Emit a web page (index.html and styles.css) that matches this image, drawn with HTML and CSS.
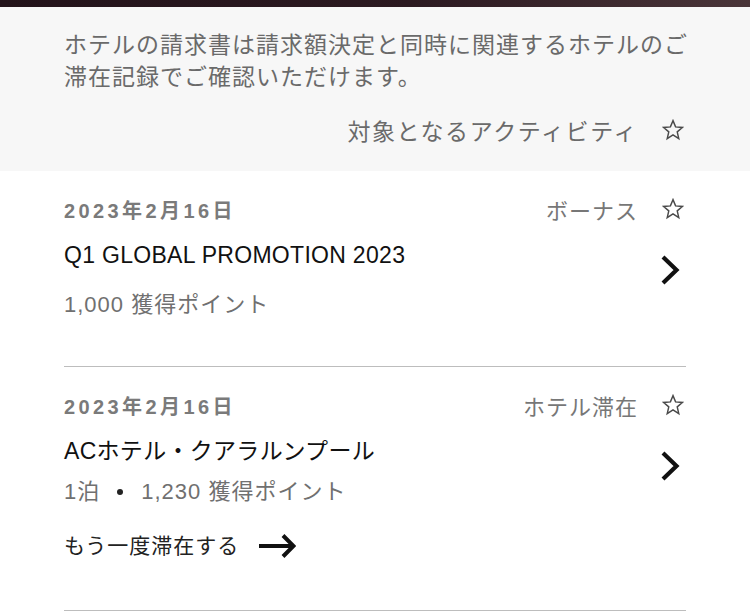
FILE: index.html
```html
<!DOCTYPE html>
<html lang="ja">
<head>
<meta charset="utf-8">
<title>アクティビティ</title>
<link rel="stylesheet" href="styles.css">
</head>
<body>
<div class="topbar"></div>
<section class="notice">
  <p class="notice-text">ホテルの請求書は請求額決定と同時に関連するホテルのご滞在記録でご確認いただけます。</p>
  <div class="filter">
    <span class="filter-label">対象となるアクティビティ</span>
    <svg class="star" viewBox="0 0 24 24" width="22" height="22"><polygon points="12,1.8 14.8,8.6 22.2,9.2 16.6,14 18.3,21.4 12,17.4 5.7,21.4 7.4,14 1.8,9.2 9.2,8.6"/></svg>
  </div>
</section>
<ul class="activity-list">
  <li class="activity">
    <div class="activity-head">
      <span class="date">2023年2月16日</span>
      <span class="type">ボーナス</span>
      <svg class="star" viewBox="0 0 24 24" width="22" height="22"><polygon points="12,1.8 14.8,8.6 22.2,9.2 16.6,14 18.3,21.4 12,17.4 5.7,21.4 7.4,14 1.8,9.2 9.2,8.6"/></svg>
    </div>
    <div class="activity-body">
      <div class="activity-info">
        <div class="title">Q1 GLOBAL PROMOTION 2023</div>
        <div class="points">1,000 獲得ポイント</div>
      </div>
      <svg class="chevron" viewBox="0 0 20 30" width="20" height="30"><polyline points="3,2 16.5,15 3,28"/></svg>
    </div>
  </li>
  <li class="activity activity-stay">
    <div class="activity-head">
      <span class="date">2023年2月16日</span>
      <span class="type">ホテル滞在</span>
      <svg class="star" viewBox="0 0 24 24" width="22" height="22"><polygon points="12,1.8 14.8,8.6 22.2,9.2 16.6,14 18.3,21.4 12,17.4 5.7,21.4 7.4,14 1.8,9.2 9.2,8.6"/></svg>
    </div>
    <div class="activity-body">
      <div class="activity-info">
        <div class="title">ACホテル・クアラルンプール</div>
        <div class="meta"><span>1泊</span><span class="dot"></span><span>1,230 獲得ポイント</span></div>
        <div class="rebook">
          <span>もう一度滞在する</span>
          <svg class="arrow" viewBox="0 0 38 24" width="38" height="24"><line x1="1" y1="12" x2="35" y2="12"/><polyline points="25,1.5 35.5,12 25,22.5"/></svg>
        </div>
      </div>
      <svg class="chevron" viewBox="0 0 20 30" width="20" height="30"><polyline points="3,2 16.5,15 3,28"/></svg>
    </div>
  </li>
</ul>
</body>
</html>
```
FILE: styles.css
```css
html, body {
  margin: 0;
  padding: 0;
  background: #ffffff;
}

body {
  font-family: "Liberation Sans", "Noto Sans CJK JP", sans-serif;
  color: #111;
  width: 750px;
  overflow: hidden;
}

.topbar {
  height: 7px;
  background: linear-gradient(90deg, #23131a 0%, #2c1a21 55%, #4a3539 100%);
}

.notice {
  background: #f7f7f7;
  padding: 22px 50px 26px 64px;
}

.notice-text {
  margin: 0;
  font-size: 23px;
  line-height: 32px;
  letter-spacing: 1px;
  color: #6a6a6a;
}

.filter {
  margin-top: 22px;
  padding-right: 14px;
  display: flex;
  justify-content: flex-end;
  align-items: center;
  height: 30px;
}

.filter-label {
  font-size: 23px;
  letter-spacing: 1.6px;
  color: #6a6a6a;
}

.star {
  flex: none;
  margin-left: 24px;
  margin-right: 2px;
  fill: none;
  stroke: #4a4a4a;
  stroke-width: 1.6;
  stroke-linejoin: miter;
}

.activity-list {
  list-style: none;
  margin: 0;
  padding: 0 64px;
}

.activity {
  padding: 26px 0 46px;
  border-bottom: 1px solid #bdbdbd;
}

.activity-stay {
  padding-bottom: 49px;
}

.activity-head {
  display: flex;
  align-items: center;
  height: 24px;
}

.date {
  flex: 1;
  font-size: 20px;
  font-weight: bold;
  letter-spacing: 3.4px;
  color: #7a7a7a;
}

.type {
  font-size: 22px;
  letter-spacing: 1px;
  color: #777;
}

.activity-body {
  display: flex;
  align-items: flex-start;
}

.activity-info {
  flex: 1;
}

.title {
  margin-top: 19px;
  font-size: 23px;
  line-height: 30px;
  letter-spacing: 0.3px;
  color: #111;
}

.points {
  margin-top: 20px;
  font-size: 22px;
  line-height: 30px;
  letter-spacing: 1px;
  color: #707070;
}

.meta {
  margin-top: 11px;
  display: flex;
  align-items: center;
  font-size: 22px;
  line-height: 30px;
  letter-spacing: 1px;
  color: #707070;
}

.dot {
  width: 6px;
  height: 6px;
  border-radius: 50%;
  background: #222;
  margin: 0 18px 0 17px;
}

.rebook {
  margin-top: 24px;
  display: flex;
  align-items: center;
  font-size: 21px;
  line-height: 30px;
  letter-spacing: 1px;
  color: #222;
}

.arrow {
  margin-left: 19px;
  fill: none;
  stroke: #111;
  stroke-width: 4;
}

.chevron {
  flex: none;
  margin-top: 34px;
  margin-right: 6px;
  fill: none;
  stroke: #111;
  stroke-width: 4.2;
  stroke-linejoin: miter;
}
```
